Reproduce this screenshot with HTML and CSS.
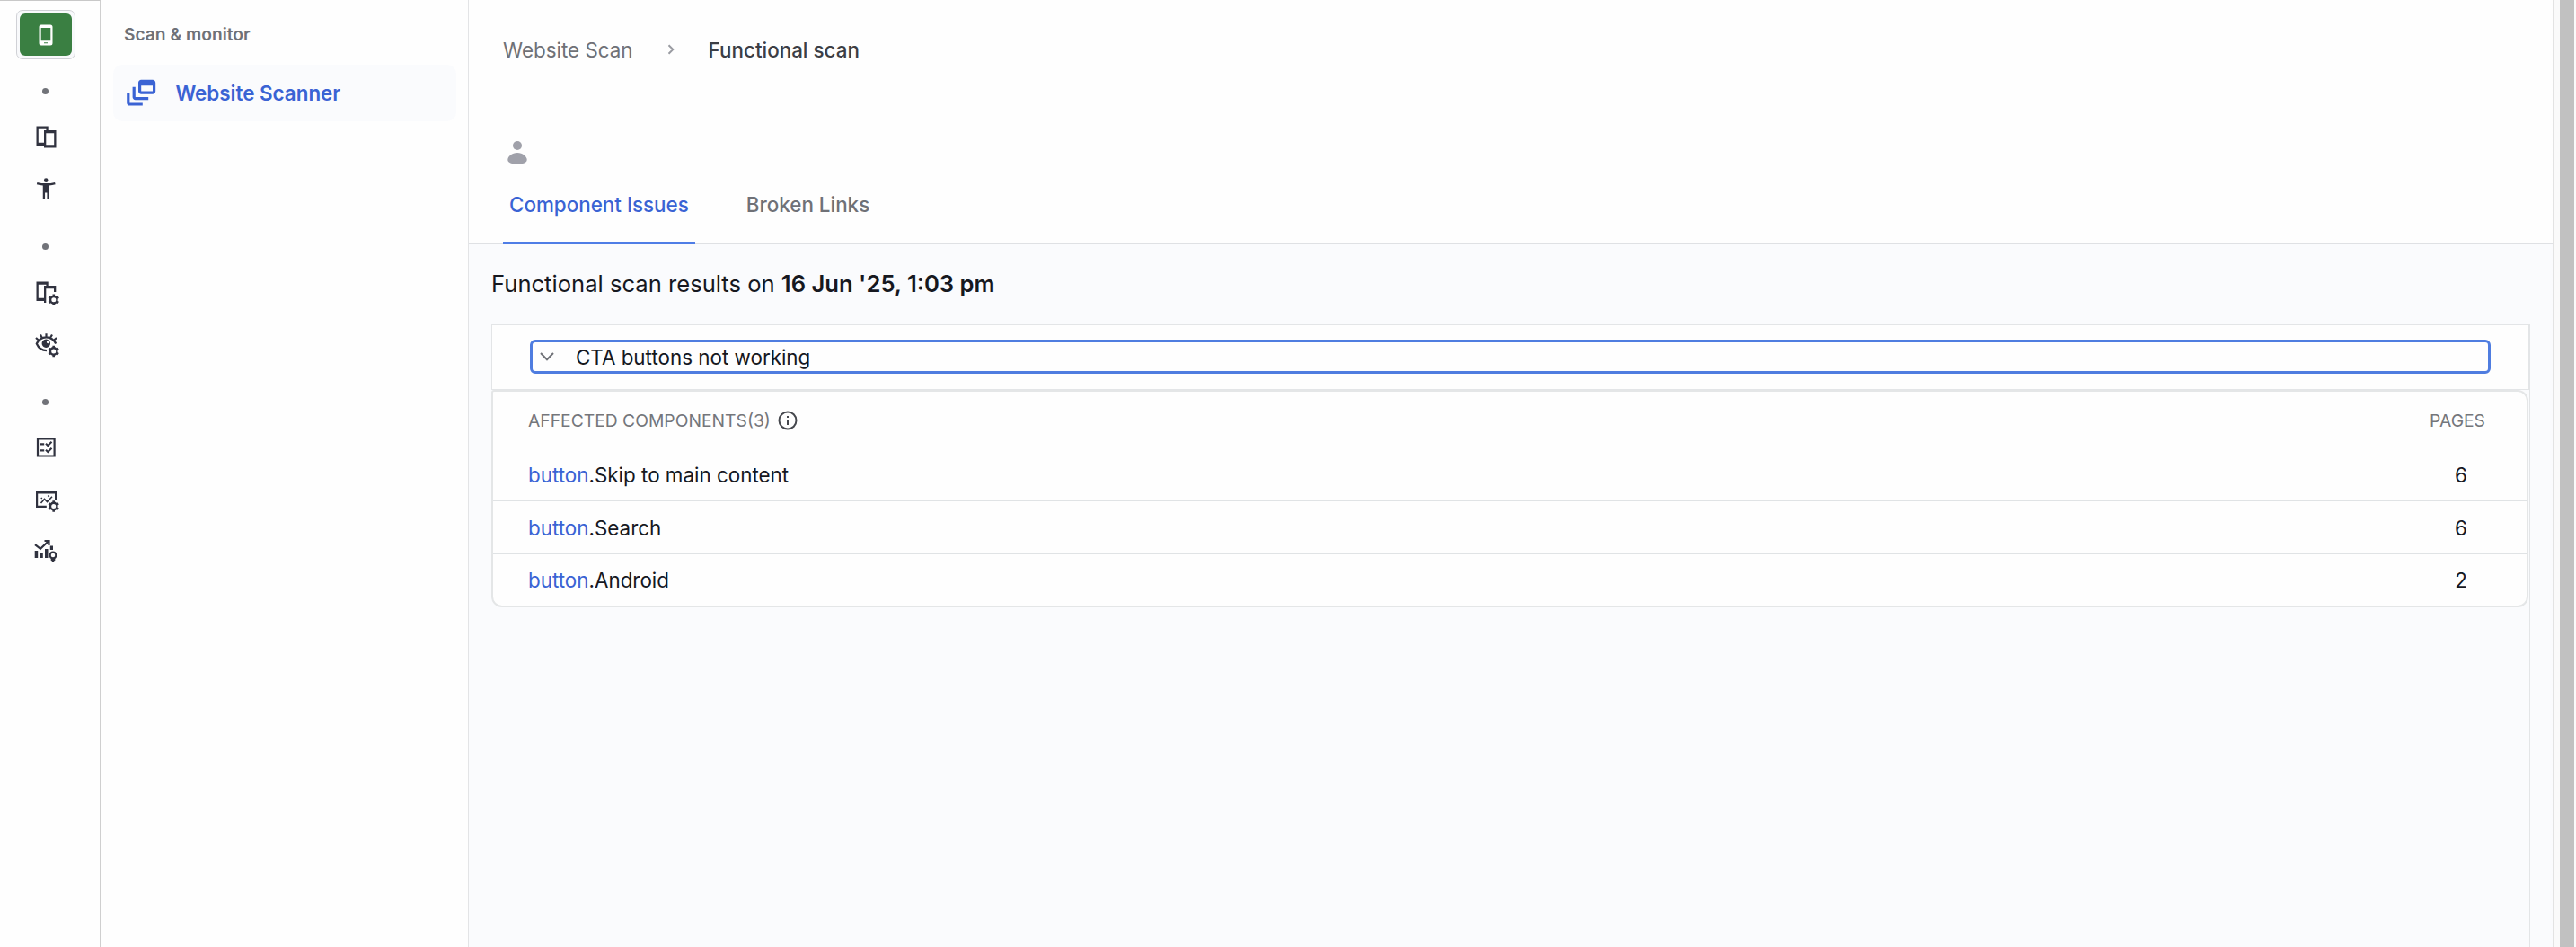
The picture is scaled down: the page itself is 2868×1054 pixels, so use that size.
FILE: index.html
```html
<!DOCTYPE html>
<html lang="en">
<head>
    <meta charset="UTF-8">
    <meta name="viewport" content="width=device-width, initial-scale=1.0">
    <title>Website Scanner</title>
    <link rel="stylesheet" href="styles.css">
</head>
<body>

    <svg class="defs" width="0" height="0">
        <defs>
            <g id="gear">
                <circle r="3.7" fill="none" stroke="currentColor" stroke-width="2.4"/>
                <path d="M-1.3-6.3h2.6v2.3h-2.6zM-1.3 4h2.6v2.3h-2.6z"/>
                <path d="M-1.3-6.3h2.6v2.3h-2.6zM-1.3 4h2.6v2.3h-2.6z" transform="rotate(60)"/>
                <path d="M-1.3-6.3h2.6v2.3h-2.6zM-1.3 4h2.6v2.3h-2.6z" transform="rotate(120)"/>
            </g>
        </defs>
    </svg>

    <div class="app">
        <nav class="rail">
            <a class="rail-home">
                <span class="rail-logo">
                    <svg width="16" height="24" viewBox="0 0 16 24"><path fill-rule="evenodd" d="M3 .5h10A2.5 2.5 0 0 1 15.500 3v18a2.500 2.500 0 0 1-2.500 2.500H3A2.500 2.500 0 0 1 .5 21V3A2.500 2.500 0 0 1 3 .5zM2.700 4v14.300h10.600V4zM6 20.300v1h4v-1z"/></svg>
                </span>
            </a>
            <span class="rail-dot"></span>
            <a class="rail-item">
                <svg viewBox="0 0 30 30"><path fill-rule="evenodd" d="M4.500 3.500h13.200v4.500h-2.300V6.700H6.800v15h6.200V25H4.500zM13 8h13.500v19.500H13zm2.300 3.200v13h8.900v-13z"/></svg>
            </a>
            <a class="rail-item">
                <svg viewBox="-1.200 -.9 26 26"><circle cx="12" cy="4" r="2"/><path d="M20.500 6c-2.610.700-5.670 1-8.500 1s-5.890-.3-8.500-1L3 8c1.860.5 4 .83 6 1v13h2v-6h2v6h2V9c2-.17 4.140-.5 6-1l-.5-2z"/></svg>
            </a>
            <span class="rail-dot"></span>
            <a class="rail-item">
                <svg viewBox="0 0 30 30"><path fill-rule="evenodd" d="M4.500 3.500h13.200v4.500H26.300v7h-2.300v-3.800H15.300V27H13v-2H4.500zM6.800 6.700v15H13V8h2.400V6.700z"/><use href="#gear" x="23.800" y="23.800"/></svg>
            </a>
            <a class="rail-item">
                <svg viewBox="0 0 30 30"><path class="line" d="M16 22.200C10 22 6.500 18.500 4.800 14.500 7 9.800 11 7.300 15.500 7.300S24 9.800 26.200 14.500M6.500 10.300L4 8M10.500 7.500L9 4.500M15.500 7V3.200M20.300 7.500L22 4.500M24.500 10.300L27 8"/><path fill-rule="evenodd" d="M15.300 9.500a4.700 4.700 0 1 0 .01 0zM17.500 11a1.600 1.600 0 1 1-.01 0z"/><use href="#gear" x="23.700" y="23"/></svg>
            </a>
            <span class="rail-dot"></span>
            <a class="rail-item">
                <svg viewBox="0 0 30 30"><path class="line" d="M6 5.500h18.600v19H6z"/><path d="M9 10.300h4.200v2.200H9zM9 17.300h4.200v2.200H9z"/><path class="line" d="M15 10.800l2.300 2.200 4.200-4.200M15 17.800l2.300 2.200 4.200-4.200"/></svg>
            </a>
            <a class="rail-item">
                <svg viewBox="0 0 30 30"><path d="M4 5h23.300v10H25V8.500H6.200v13.200h9.600V24H4z"/><path class="thin" d="M9.500 19l4-4.500 3 3L22 11.800M9.800 14l1-1M17.300 10.500l1.400 1.400"/><use href="#gear" x="23.700" y="22.500"/></svg>
            </a>
            <a class="rail-item">
                <svg viewBox="0 0 30 30"><path d="M2.700 14h3.500v8H2.700zM8.300 17h3.500v5H8.300zM14 12h3.500v10H14zM19.800 8.500H23V13h-3.200zM20.700 22.500h4.600v2.500h-1v1.300h-2.600V25h-1z"/><path class="line" d="M3 7.200l6 4.600 9-8.500M13.500 3h5v5"/><circle class="line" cx="23" cy="19" r="3.400"/></svg>
            </a>
        </nav>

        <aside class="sidebar">
            <h2 class="sidebar-title">Scan &amp; monitor</h2>
            <a class="sidebar-link">
                <svg width="38.400" height="38.400" viewBox="0 0 24 24"><path d="M8 8H6v7c0 1.100.9 2 2 2h9v-2H8V8z"/><path d="M20 3h-8c-1.100 0-2 .9-2 2v6c0 1.100.9 2 2 2h8c1.100 0 2-.9 2-2V5c0-1.100-.9-2-2-2zm0 8h-8V7h8v4z"/><path d="M4 12H2v7c0 1.100.9 2 2 2h9v-2H4v-7z"/></svg>
                <span>Website Scanner</span>
            </a>
        </aside>

        <main class="main">
            <header class="page-header">
                <div class="breadcrumb">
                    <a class="crumb">Website Scan</a>
                    <svg width="8" height="12" viewBox="0 0 8 12"><path d="M1.500 1.200L6.300 6l-4.800 4.800"/></svg>
                    <span class="crumb-current">Functional scan</span>
                </div>
                <svg class="avatar" width="22" height="26" viewBox="0 0 22 26"><circle cx="11" cy="5" r="5"/><path d="M11 13c6 0 10.700 4.500 10.700 7.700S17 25.800 11 25.800.3 24 .3 20.700 5 13 11 13z"/></svg>
                <div class="tabs">
                    <a class="tab active"><span>Component Issues</span></a>
                    <a class="tab"><span>Broken Links</span></a>
                </div>
            </header>

            <section class="content">
                <h1 class="results-title">Functional scan results on <b>16 Jun '25, 1:03 pm</b></h1>
                <div class="results">
                    <div class="issue">
                        <button class="issue-toggle">
                            <svg width="16" height="10" viewBox="0 0 16 10"><path d="M1 1l7 7.200L15 1"/></svg>
                            <span class="issue-name">CTA buttons not working</span>
                        </button>
                    </div>
                    <div class="card">
                        <div class="card-head">
                            <span class="affected">AFFECTED COMPONENTS(3)</span>
                            <svg width="22" height="22" viewBox="0 0 22 22"><circle cx="11" cy="11" r="9.500"/><path d="M11 10v6M11 6v2"/></svg>
                            <span class="pages">PAGES</span>
                        </div>
                        <div class="card-row"><span class="name"><a>button</a>.Skip to main content</span><span class="count">6</span></div>
                        <div class="card-row"><span class="name"><a>button</a>.Search</span><span class="count">6</span></div>
                        <div class="card-row"><span class="name"><a>button</a>.Android</span><span class="count">2</span></div>
                    </div>
                </div>
            </section>
        </main>

        <div class="scrollbar"><div class="thumb"></div></div>
    </div>

</body>
</html>
```
FILE: styles.css
```css
* {
    box-sizing: border-box;
}

body {
    margin: 0;
    font-family: Inter, sans-serif;
    font-size: 22.4px;
    color: #16181f;
    background: #fefefe;
}

svg {
    display: block;
    flex: none;
}

.defs {
    display: none;
}

.app {
    display: flex;
    height: 1054px;
    overflow: hidden;
}

.rail {
    width: 112px;
    flex: none;
    border-top: 1px solid #c8c8c8;
    border-right: 1px solid #cfcfcf;
    padding: 10px 0 0 18px;
}

.rail-home {
    display: block;
    width: 66px;
    height: 55px;
    border: 1px solid #d0d1d6;
    border-radius: 7px;
    padding: 3px;
    background: #f8f9fb;
}

.rail-logo {
    display: flex;
    align-items: center;
    justify-content: center;
    height: 47px;
    border-radius: 6px;
    background: #3a7f42;
    fill: #ffffff;
}

.rail-dot {
    display: block;
    height: 57px;
    padding: 32px 0 0 29px;
}

.rail-dot::before {
    content: "";
    display: block;
    width: 7px;
    height: 7px;
    border-radius: 50%;
    background: #717379;
}

.rail-item {
    display: flex;
    align-items: center;
    height: 58px;
    padding-left: 18px;
    color: #30323f;
}

.rail-item svg {
    width: 30px;
    height: 30px;
    fill: currentColor;
}

.rail-item .line,
.rail-item .thin {
    fill: none;
    stroke: currentColor;
    stroke-width: 2.2;
}

.rail-item .thin {
    stroke-width: 1.6;
}

.sidebar {
    width: 410px;
    flex: none;
    border-right: 1px solid #e3e4e6;
    padding: 24px 13px 0 14px;
}

.sidebar-title {
    margin: 0 0 20px;
    padding-left: 12px;
    font-size: 19.2px;
    line-height: 28px;
    font-weight: 600;
    color: #6f7177;
}

.sidebar-link {
    display: flex;
    align-items: center;
    gap: 19px;
    height: 63px;
    padding-left: 12px;
    border-radius: 10px;
    background: #fafbfd;
    color: #3a63d4;
    fill: #3a63d4;
    font-weight: 600;
}

.main {
    flex: 1;
    min-width: 0;
    display: flex;
    flex-direction: column;
    border-right: 2px solid #e3e3e3;
}

.page-header {
    height: 272px;
    padding: 39px 0 0 38px;
    border-bottom: 1px solid #dfe1e4;
}

.breadcrumb {
    display: flex;
    align-items: center;
    height: 32px;
    color: #6f7177;
}

.breadcrumb svg {
    margin: 0 38px;
    fill: none;
    stroke: #9a9ca2;
    stroke-width: 2;
}

.crumb-current {
    color: #3c3e45;
    font-weight: 500;
}

.avatar {
    margin: 86px 0 0 5px;
    fill: #a0a1aa;
}

.tabs {
    display: flex;
    gap: 50px;
    height: 89px;
}

.tab {
    padding: 29px 7px 0;
    line-height: 32px;
    font-weight: 500;
    color: #6f7177;
}

.tab.active {
    color: #3a63d4;
    border-bottom: 3px solid #4f7de6;
}

.content {
    flex: 1;
    padding: 26px 25px 0;
    background: #fafbfd;
}

.results-title {
    margin: 0 0 27px;
    font-size: 25.6px;
    line-height: 36px;
    font-weight: 400;
}

.results-title b {
    font-weight: 600;
}

.results {
    height: 693px;
    border-right: 1px solid #e3e5e7;
}

.issue {
    height: 73px;
    padding: 16px 42px 0;
    border: 1px solid #e3e5e7;
    background: #fefefe;
}

.issue-toggle {
    display: flex;
    align-items: center;
    width: 100%;
    height: 38px;
    padding: 0 8px;
    border: 3px solid #4f7de0;
    border-radius: 6px;
    background: #fefefe;
    font: inherit;
    color: inherit;
}

.issue-toggle svg {
    fill: none;
    stroke: #707278;
    stroke-width: 2;
}

.issue-name {
    margin-left: 24px;
}

.card {
    height: 242px;
    margin-right: 1px;
    border: 2px solid #e4e6e7;
    border-radius: 3px 12px 12px 12px;
    background: #fefefe;
}

.card-head {
    display: flex;
    align-items: center;
    height: 63px;
    padding: 0 46px 0 39px;
    font-size: 19.3px;
    color: #74767b;
}

.card-head svg {
    margin-left: 8px;
    fill: none;
    stroke: #45474d;
    stroke-width: 2;
}

.pages {
    margin-left: auto;
}

.card-row {
    display: flex;
    align-items: center;
    justify-content: space-between;
    height: 59px;
    padding: 0 66px 0 39px;
    border-bottom: 1px solid #e0e3e5;
}

.card-row:last-child {
    border-bottom: none;
    height: 57px;
}

.card-row a {
    color: #3a63d4;
}

.scrollbar {
    width: 24px;
    flex: none;
    padding: 0 2px 0 6px;
    background: #fafafa;
}

.thumb {
    height: 100%;
    background: #c1c1c1;
}
```
